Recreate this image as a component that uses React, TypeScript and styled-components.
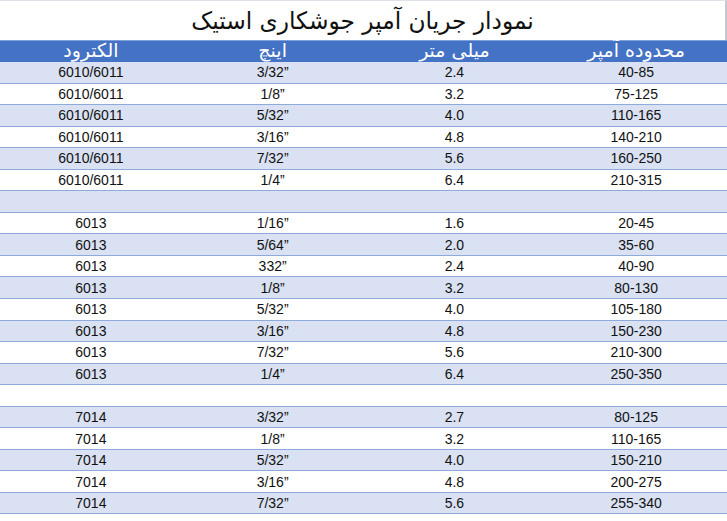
import styled, { createGlobalStyle } from 'styled-components'

const GlobalStyle = createGlobalStyle`
  html, body {
    margin: 0;
    padding: 0;
    background: #ffffff;
  }
`

type Row = [string, string, string, string] | null

// columns, right to left: amp range, mm, inch, electrode
const rows: Row[] = [
  ['40-85', '2.4', '3/32”', '6010/6011'],
  ['75-125', '3.2', '1/8”', '6010/6011'],
  ['110-165', '4.0', '5/32”', '6010/6011'],
  ['140-210', '4.8', '3/16”', '6010/6011'],
  ['160-250', '5.6', '7/32”', '6010/6011'],
  ['210-315', '6.4', '1/4”', '6010/6011'],
  null,
  ['20-45', '1.6', '1/16”', '6013'],
  ['35-60', '2.0', '5/64”', '6013'],
  ['40-90', '2.4', '332”', '6013'],
  ['80-130', '3.2', '1/8”', '6013'],
  ['105-180', '4.0', '5/32”', '6013'],
  ['150-230', '4.8', '3/16”', '6013'],
  ['210-300', '5.6', '7/32”', '6013'],
  ['250-350', '6.4', '1/4”', '6013'],
  null,
  ['80-125', '2.7', '3/32”', '7014'],
  ['110-165', '3.2', '1/8”', '7014'],
  ['150-210', '4.0', '5/32”', '7014'],
  ['200-275', '4.8', '3/16”', '7014'],
  ['255-340', '5.6', '7/32”', '7014'],
]

const headers = ['محدوده آمپر', 'میلی متر', 'اینچ', 'الکترود']

function App() {
  return (
    <Page>
      <GlobalStyle />
      <TitleBar>
        <Title>نمودار جریان آمپر جوشکاری استیک</Title>
      </TitleBar>
      <Table>
        <HeaderRow>
          {headers.map((h) => (
            <HeaderCell key={h}>{h}</HeaderCell>
          ))}
        </HeaderRow>
        {rows.map((r, i) => (
          <BodyRow key={i} $shaded={i % 2 === 0}>
            {(r ?? ['', '', '', '']).map((c, j) => (
              <Cell key={j}>{c}</Cell>
            ))}
          </BodyRow>
        ))}
      </Table>
    </Page>
  )
}

const Page = styled.div`
  width: 727px;
  height: 521px;
  overflow: hidden;
  background: #ffffff;
`
const TitleBar = styled.div`
  height: 40px;
  box-sizing: border-box;
  display: flex;
  align-items: center;
  justify-content: center;
  border-top: 1px solid #dfe2e8;
  border-right: 2px solid #c4c8d0;
`
const Title = styled.h1`
  margin: 0;
  direction: rtl;
  font-family: "DejaVu Sans", "Noto Sans", sans-serif;
  font-weight: normal;
  font-size: 24px;
  color: #111111;
  letter-spacing: -0.3px;
  transform: scaleX(0.97);
`
const Table = styled.div`
  display: flex;
  flex-direction: column;
`
const HeaderRow = styled.div`
  direction: rtl;
  display: grid;
  grid-template-columns: repeat(4, 1fr);
  height: 22px;
  box-sizing: border-box;
  background: #4472c4;
  border-top: 1px solid #7f9fd8;
`
const HeaderCell = styled.div`
  display: flex;
  align-items: center;
  justify-content: center;
  color: #ffffff;
  font-family: "DejaVu Sans", "Noto Sans", sans-serif;
  font-size: 19px;
  line-height: 1;
  padding-bottom: 3px;
  overflow: visible;
  white-space: nowrap;
`
const BodyRow = styled.div<{ $shaded: boolean }>`
  direction: rtl;
  display: grid;
  grid-template-columns: repeat(4, 1fr);
  height: 21.55px;
  box-sizing: border-box;
  background: ${(p) => (p.$shaded ? '#d9e1f2' : '#ffffff')};
  border-bottom: 1.5px solid #8eaadb;
`
const Cell = styled.div`
  direction: ltr;
  display: flex;
  align-items: center;
  justify-content: center;
  font-family: "Liberation Sans", Arial, sans-serif;
  font-size: 14px;
  color: #111111;
`

export default App
